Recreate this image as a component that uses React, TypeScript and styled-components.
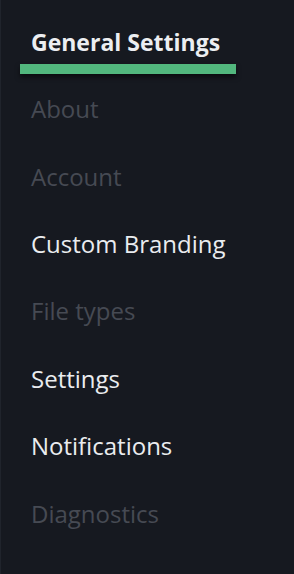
import React from "react";
import styled, { createGlobalStyle } from "styled-components";

const GlobalStyle = createGlobalStyle`
  html, body {
    margin: 0;
    padding: 0;
    background: #161920;
  }
  body {
    font-family: "Open Sans", "Noto Sans", sans-serif;
    -webkit-font-smoothing: antialiased;
  }
`;

const Sidebar = styled.nav`
  width: 294px;
  height: 574px;
  box-sizing: border-box;
  background: #161920;
  border-left: 1px solid #20242c;
  display: flex;
  flex-direction: column;
  overflow: hidden;
`;

const ActiveTab = styled.div`
  display: flex;
  flex-direction: column;
  align-items: flex-start;
  padding-top: 25px;
  padding-left: 19px;
`;

const ActiveLabel = styled.span`
  font-size: 23px;
  font-weight: 700;
  line-height: 34px;
  color: #eceef1;
  padding-left: 11px;
`;

const Underline = styled.div`
  width: 216px;
  height: 10px;
  margin-top: 5px;
  background: #52b77e;
  box-shadow: 0 3px 5px rgba(0, 0, 0, 0.55);
`;

const List = styled.ul`
  list-style: none;
  margin: 0;
  padding: 1px 0 0 30px;
  display: flex;
  flex-direction: column;
`;

const Item = styled.li<{ $enabled?: boolean }>`
  height: 67.4px;
  display: flex;
  align-items: center;
  font-size: 24px;
  font-weight: 400;
  color: ${(p) => (p.$enabled ? "#eaecef" : "#464a53")};
`;

const items = [
  { label: "About", enabled: false },
  { label: "Account", enabled: false },
  { label: "Custom Branding", enabled: true },
  { label: "File types", enabled: false },
  { label: "Settings", enabled: true },
  { label: "Notifications", enabled: true },
  { label: "Diagnostics", enabled: false },
];

export default function App() {
  return (
    <>
      <GlobalStyle />
      <Sidebar>
        <ActiveTab>
          <ActiveLabel>General Settings</ActiveLabel>
          <Underline />
        </ActiveTab>
        <List>
          {items.map((it) => (
            <Item key={it.label} $enabled={it.enabled}>
              {it.label}
            </Item>
          ))}
        </List>
      </Sidebar>
    </>
  );
}
